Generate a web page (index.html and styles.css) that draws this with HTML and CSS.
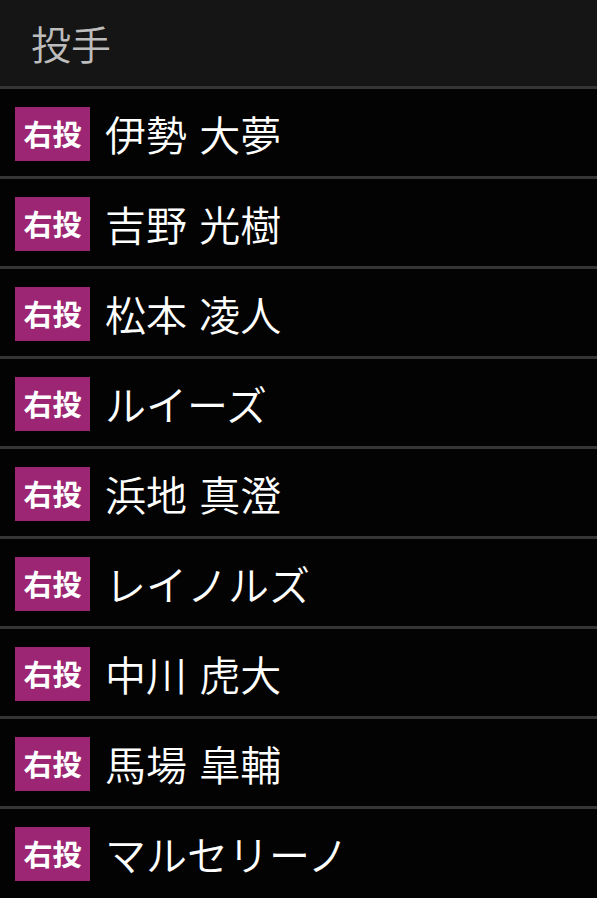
FILE: index.html
```html
<!DOCTYPE html>
<html lang="ja">
<head>
<meta charset="UTF-8" />
<meta name="viewport" content="width=device-width, initial-scale=1" />
<title>投手</title>
<link rel="stylesheet" href="styles.css">
</head>
<body>

<div class="header">投手</div>

<ul class="players">
  <li><span class="badge">右投</span><span class="name">伊勢 大夢</span></li>
  <li><span class="badge">右投</span><span class="name">吉野 光樹</span></li>
  <li><span class="badge">右投</span><span class="name">松本 凌人</span></li>
  <li><span class="badge">右投</span><span class="name">ルイーズ</span></li>
  <li><span class="badge">右投</span><span class="name">浜地 真澄</span></li>
  <li><span class="badge">右投</span><span class="name">レイノルズ</span></li>
  <li><span class="badge">右投</span><span class="name">中川 虎大</span></li>
  <li><span class="badge">右投</span><span class="name">馬場 皐輔</span></li>
  <li><span class="badge">右投</span><span class="name">マルセリーノ</span></li>
</ul>

</body>
</html>
```

FILE: styles.css
```css
body {
  margin: 0;
  background: #030303;
  font-family: "Noto Sans CJK JP", "Noto Sans", sans-serif;
}
.header {
  height: 86px;
  display: flex;
  align-items: center;
  padding-left: 31px;
  background: #151515;
  color: #bdbdbd;
  font-size: 40px;
  font-weight: 350;
  box-sizing: border-box;
}
.players { list-style: none; margin: 0; padding: 0; }
.players li {
  height: 90px;
  box-sizing: border-box;
  border-top: 3px solid #353535;
  display: flex;
  align-items: center;
  padding: 2px 0 0 15px;
  background: #030303;
}
.badge {
  width: 75px;
  height: 54px;
  background: #9c2674;
  color: #fff;
  font-size: 29px;
  font-weight: bold;
  display: flex;
  align-items: center;
  justify-content: center;
  line-height: 1;
}
.name {
  margin-left: 15px;
  color: #fff;
  font-size: 41px;
  font-weight: 350;
  word-spacing: 3px;
  line-height: 1;
}
```
